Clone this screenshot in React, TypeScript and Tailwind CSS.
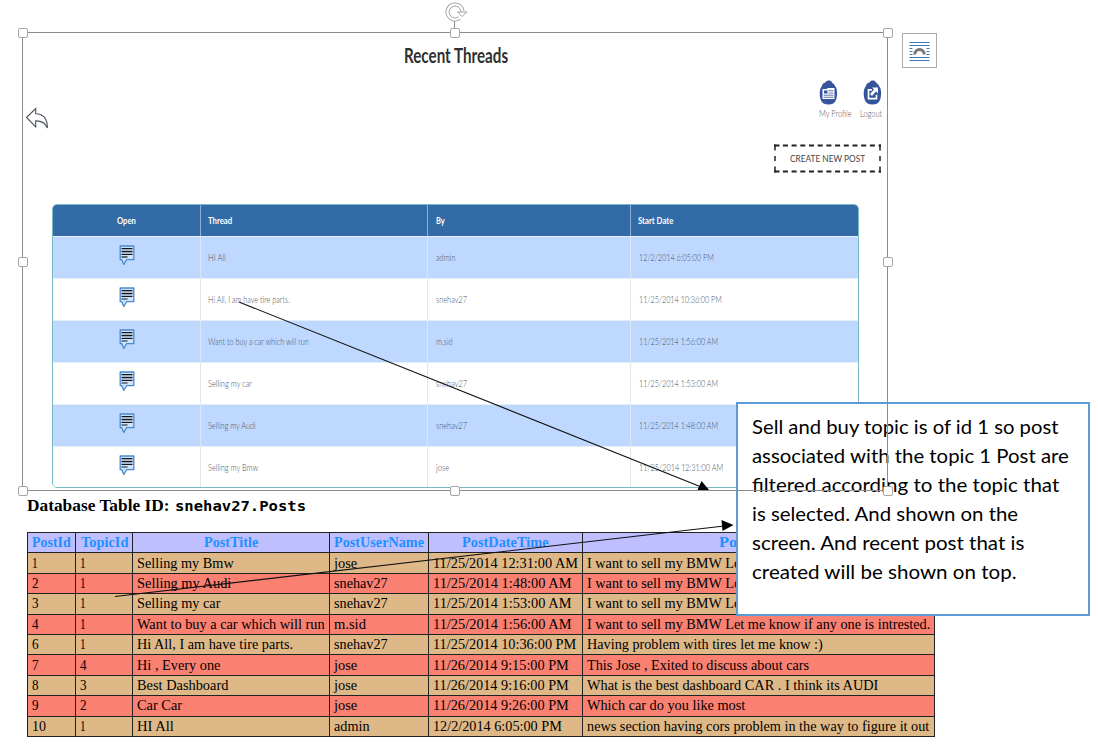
import React, { useLayoutEffect, useRef, useState } from "react";

function Fit({ w, className = "", children }: { w: number; className?: string; children: string }) {
  const ref = useRef<HTMLSpanElement>(null);
  const [scale, setScale] = useState(1);
  useLayoutEffect(() => {
    if (ref.current) setScale(w / ref.current.offsetWidth);
  }, [w]);
  return (
    <span className={`block shrink-0 ${className}`} style={{ width: w }}>
      <span ref={ref} className="inline-block origin-left whitespace-nowrap" style={{ transform: `scaleX(${scale})` }}>
        {children}
      </span>
    </span>
  );
}

type Cell = [string, number];

const threads: [Cell, Cell, Cell][] = [
  [["HI All", 18], ["admin", 19], ["12/2/2014 6:05:00 PM", 75]],
  [["Hi All, I am have tire parts.", 82], ["snehav27", 31], ["11/25/2014 10:36:00 PM", 83]],
  [["Want to buy a car which will run", 101], ["m.sid", 17], ["11/25/2014 1:56:00 AM", 79]],
  [["Selling my car", 44], ["snehav27", 31], ["11/25/2014 1:53:00 AM", 79]],
  [["Selling my Audi", 48], ["snehav27", 31], ["11/25/2014 1:48:00 AM", 79]],
  [["Selling my Bmw", 50], ["jose", 13], ["11/25/2014 12:31:00 AM", 84]],
];

const bmw: Cell = ["I want to sell my BMW Let me know if any one is intrested.", 343];
const posts: Cell[][] = [
  [["1", 6], ["1", 6], ["Selling my Bmw", 97], ["jose", 23], ["11/25/2014 12:31:00 AM", 145], bmw],
  [["2", 7], ["1", 6], ["Selling my Audi", 94], ["snehav27", 54], ["11/25/2014 1:48:00 AM", 138], bmw],
  [["3", 7], ["1", 6], ["Selling my car", 83], ["snehav27", 54], ["11/25/2014 1:53:00 AM", 138], bmw],
  [["4", 7], ["1", 6], ["Want to buy a car which will run", 188], ["m.sid", 32], ["11/25/2014 1:56:00 AM", 138], bmw],
  [["6", 7], ["1", 6], ["Hi All, I am have tire parts.", 156], ["snehav27", 54], ["11/25/2014 10:36:00 PM", 143], ["Having problem with tires let me know :)", 236]],
  [["7", 7], ["4", 7], ["Hi , Every one", 83], ["jose", 23], ["11/26/2014 9:15:00 PM", 136], ["This Jose , Exited to discuss about cars", 222]],
  [["8", 7], ["3", 7], ["Best Dashboard", 91], ["jose", 23], ["11/26/2014 9:16:00 PM", 136], ["What is the best dashboard CAR . I think its AUDI", 291]],
  [["9", 7], ["2", 7], ["Car Car", 45], ["jose", 23], ["11/26/2014 9:26:00 PM", 136], ["Which car do you like most", 158]],
  [["10", 14], ["1", 6], ["HI All", 37], ["admin", 36], ["12/2/2014 6:05:00 PM", 129], ["news section having cors problem in the way to figure it out", 342]],
];
const postHeads: Cell[] = [["PostId", 39], ["TopicId", 47], ["PostTitle", 54], ["PostUserName", 90], ["PostDateTime", 87], ["PostDetails", 79]];

const note: Cell[] = [
  ["Sell and buy topic is of id 1 so post", 306],
  ["associated with the topic 1 Post are", 317],
  ["filtered according to the topic that", 307],
  ["is selected. And shown on the", 266],
  ["screen. And recent post that is", 272],
  ["created will be shown on top.", 264],
];

function CommentIcon() {
  return (
    <svg width="16" height="21" viewBox="0 0 16 21" className="block">
      <path d="M1.200 1h13.600v13.700H7.500l-2.700 4.800-2-4.800H1.200z" fill="#cfe2fb" stroke="#4a8ace" strokeWidth="1.300" strokeLinejoin="round" />
      <path d="M2.500 3.500h11M2.500 6.500h11M2.500 9.500h11" stroke="#111820" strokeWidth="1.200" />
      <path d="M2.500 4.900h11M2.500 7.900h11" stroke="#8c9aa8" strokeWidth="1.200" />
      <path d="M2.500 12h6" stroke="#111820" strokeWidth="1.200" />
    </svg>
  );
}

function Badge({ children }: { children: React.ReactNode }) {
  return (
    <svg width="19" height="26" viewBox="0 0 19 26" className="block">
      <path d="M3.200 5C4 2.800 5.500 3.300 6.500 2.300 8 0 12 0 13 2.500c.6 1.200 1.900.7 2.500 2.500.3 1.200 1.500 1.800 2 3.500.9 3 .9 8-.4 11.200C15.700 23 13.500 24.500 9.500 24.500S3 23 1.700 19.700C.4 16 .4 11 1.500 8.500 2 7 3 6.500 3.200 5z" fill="#35549b" />
      {children}
    </svg>
  );
}

function Handle({ className }: { className: string }) {
  return <div className={`absolute size-[10px] rounded-[2px] border border-[#a6a6a6] bg-white ${className}`} />;
}

export default function App() {
  return (
    <div className="relative h-[751px] w-[1098px] overflow-hidden bg-white font-['Lato',sans-serif]">
      <section className="flex h-[491px] w-[888px] flex-col pl-[26px] pt-[43px]">
        <h1 className="flex h-[27px] pl-[378px] text-[20px] font-bold leading-[25px] text-[#303030]">
          <Fit w={104}>Recent Threads</Fit>
        </h1>
        <div className="flex h-[74px] justify-between pt-[10px]">
          <svg width="24" height="24" viewBox="0 0 24 24" className="mt-[26px] block">
            <path d="M.5 11.500 9.700 2.500v5.300c8 .2 11.700 5.900 11.700 14.200-2-5-5.500-7.300-11.700-7.100v5.900z" fill="white" stroke="#4b5260" strokeWidth="1.100" />
          </svg>
          <div className="flex pr-[6px] text-[9.500px] font-light leading-[12px] text-[#555]">
            <div className="w-[41px]">
              <Badge>
                <path d="M3.500 9h4l1-1h7v11h-12z" fill="white" />
                <path d="M5 10.500h3.500v3H5z" fill="#35549b" />
                <path d="M9.500 10.700h5M9.500 13h5M4.700 15.200h9.800M4.700 17.300h9.800" stroke="#35549b" strokeWidth=".8" />
              </Badge>
              <Fit w={33} className="pt-[2px]">My Profile</Fit>
            </div>
            <div className="w-[22px]">
              <div className="pl-[3px]">
                <Badge>
                  <path d="M9 9.800H5.500v8.900h8v-4" fill="none" stroke="white" strokeWidth="1.700" />
                  <path d="M9 7.500h6v6l-2-2-4 4.500-2-2 4-4.500z" fill="white" />
                </Badge>
              </div>
              <Fit w={22} className="pt-[2px]">Logout</Fit>
            </div>
          </div>
        </div>
        <div className="relative ml-[747.500px] flex h-[29px] w-[107px] items-center pl-[16px] pt-px text-[9.500px] leading-[12px] text-[#444]">
          <svg width="107" height="29" className="absolute inset-0">
            <path d="M0 1.500h107M0 27.500h107" stroke="#222" strokeWidth="1.800" strokeDasharray="5.500 3.400 5 3.700 5 3.700 5 3.700 5 3.700 5 3.700 5 3.700 5 3.700 5 3.700 5 3.700 5 3.700 5 3.700 5.500" />
            <path d="M1 .6v27.800M106 .6v27.800" stroke="#222" strokeWidth="1.500" strokeDasharray="6 5.500 4.800 5.500 6" />
          </svg>
          <Fit w={75}>CREATE NEW POST</Fit>
        </div>
        <div className="ml-[26px] mt-[31px] h-[284px] w-[807px] overflow-hidden rounded-[5px] border border-[#79b8c5] text-[10px] leading-[12px]">
          <div className="grid h-[31px] grid-cols-[148px_227px_203px_1fr] bg-[#326ba6] font-bold text-white">
            <div className="flex items-center justify-center border-r border-[#8fb0d0] pb-[2px]"><Fit w={19}>Open</Fit></div>
            <div className="flex items-center border-r border-[#8fb0d0] pb-[2px] pl-[7px]"><Fit w={24}>Thread</Fit></div>
            <div className="flex items-center border-r border-[#8fb0d0] pb-[2px] pl-[8px]"><Fit w={9}>By</Fit></div>
            <div className="flex items-center pb-[2px] pl-[7px]"><Fit w={35}>Start Date</Fit></div>
          </div>
          {threads.map((r, i) => (
            <div key={i} className={`grid h-[42px] grid-cols-[148px_227px_203px_1fr] border-t border-[#e4eef6] text-[10.500px] font-light text-[#48525e] ${i % 2 ? "bg-white" : "bg-[#bfd8ff]"}`}>
              <div className="flex justify-center border-r border-[#dce9ee] pt-[8px]"><CommentIcon /></div>
              <div className="flex items-center border-r border-[#dce9ee] pb-px pl-[7px]"><Fit w={r[0][1]}>{r[0][0]}</Fit></div>
              <div className="flex items-center border-r border-[#dce9ee] pb-px pl-[7.500px]"><Fit w={r[1][1]}>{r[1][0]}</Fit></div>
              <div className="flex items-center pb-px pl-[7.500px]"><Fit w={r[2][1]}>{r[2][0]}</Fit></div>
            </div>
          ))}
        </div>
      </section>

      <section className="pl-[27px] font-['Liberation_Serif',serif] text-black">
        <h2 className="flex h-[41px] items-baseline pt-[4px] text-[16px] font-bold leading-[22px]">
          <Fit w={143}>Database Table ID:</Fit>
          <Fit w={131} className="ml-[4.500px] font-['DejaVu_Sans_Mono',monospace] text-[14px]">snehav27.Posts</Fit>
        </h2>
        <div className="w-[908px] border-l border-t border-[#222] text-[15px] leading-[18px]">
          <div className="grid h-[20.400px] grid-cols-[48px_57px_197px_99px_154px_352px] bg-[#bfbfff] font-bold text-[#1e90ff]">
            {postHeads.map(([t, w]) => (
              <div key={t} className="flex items-center justify-center border-b border-r border-[#222] pb-px"><Fit w={w}>{t}</Fit></div>
            ))}
          </div>
          {posts.map((r, i) => (
            <div key={i} className={`grid h-[20.400px] grid-cols-[48px_57px_197px_99px_154px_352px] ${i % 2 ? "bg-[#fa8072]" : "bg-[#deb887]"}`}>
              {r.map(([t, w], j) => (
                <div key={j} className="flex items-center border-b border-r border-[#222] pb-px pl-[4px]"><Fit w={w}>{t}</Fit></div>
              ))}
            </div>
          ))}
        </div>
      </section>

      <svg width="1098" height="751" className="absolute inset-0">
        <path d="M239 302 700 486.500M115 596.500 724 526" stroke="#111" strokeWidth="1.100" fill="none" />
        <path d="M709.500 490.500 697 491l4.500-10zM733.500 525l-12-5 1 11z" fill="#000" />
      </svg>

      <aside className="absolute left-[736px] top-[402px] h-[214px] w-[354px] border-2 border-[#5b9bd5] bg-white pl-[14px] pt-[8px] text-[19px] leading-[29px] text-black">
        {note.map(([t, w]) => <Fit key={t} w={w}>{t}</Fit>)}
      </aside>

      <div className="absolute left-[22px] top-[32px] h-[459px] w-[866px] border border-[#8c8c8c]" />
      <div className="absolute left-[454px] top-[20px] h-[9px] w-px bg-[#8c8c8c]" />
      <Handle className="left-[18px] top-[28px]" />
      <Handle className="left-[450px] top-[28px]" />
      <Handle className="left-[883px] top-[28px]" />
      <Handle className="left-[18px] top-[257px]" />
      <Handle className="left-[883px] top-[257px]" />
      <Handle className="left-[18px] top-[486px]" />
      <Handle className="left-[450px] top-[486px]" />
      <Handle className="left-[883px] top-[486px]" />
      <svg width="26" height="22" viewBox="0 0 26 22" className="absolute left-[444px] top-[1px]">
        <path d="M18.500 10.500A7.500 7.500 0 1 0 15.500 17" fill="none" stroke="#a0a0a0" strokeWidth="4" />
        <path d="M18.500 11.500A7.500 7.500 0 1 0 15.900 16.700" fill="none" stroke="white" strokeWidth="2.200" />
        <path d="M13.500 11h9.500l-5 4.500z" fill="white" stroke="#a0a0a0" />
      </svg>
      <div className="absolute left-[902px] top-[33px] flex size-[35px] items-center justify-center border border-[#ababab] bg-white">
        <svg width="21" height="20" viewBox="0 0 21 20">
          <path d="M.5 1.500h20M.5 4.500h20M.5 7.500h3M17.500 7.500h3M.5 10.500h3M17.500 10.500h3M.5 13.500h3M17.500 13.500h3M.5 16.500h20M.5 19.500h20" stroke="#3b78b8" />
          <path d="M5.700 13.500a4.800 5 0 0 1 9.600 0" fill="none" stroke="#777" strokeWidth="3" />
        </svg>
      </div>
    </div>
  );
}
